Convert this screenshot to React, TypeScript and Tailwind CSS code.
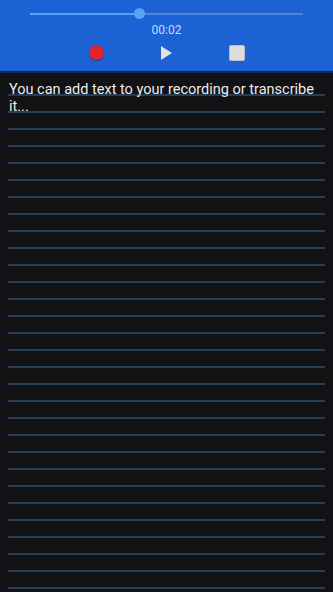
const lines = Array.from({ length: 30 });

export default function App() {
  return (
    <div className="w-[333px] h-[592px] overflow-hidden bg-[#121114] font-['Roboto',sans-serif]">
      {/* player header */}
      <div className="h-[73px] bg-[#1c62d4] border-b-2 border-[#0b2a5c] flex flex-col">
        <div className="pt-[12px] px-[30px]">
          <div className="relative h-[4px] flex items-center">
            <div className="h-[2px] w-[110px] bg-[#5aa2f7]" />
            <div className="h-[2px] flex-1 bg-[#4f86dc]" />
            <div className="absolute left-[104px] top-[-4px] w-[11px] h-[11px] rounded-full bg-[#5aa2f7]" />
          </div>
        </div>
        <div className="mt-[7px] text-center text-[12px] leading-[14px] text-[#c9daf6]">00:02</div>
        <div className="mt-[8px] flex justify-center">
          <div className="w-[70px] flex justify-center">
            <div className="w-[15px] h-[15px] rounded-full bg-[#e0232f] shadow-[0_1px_1px_rgba(0,0,0,0.35)]" />
          </div>
          <div className="w-[70px] flex justify-center">
            <svg width="13" height="16" viewBox="0 0 13 16">
              <path d="M1 1 L12 8 L1 15 Z" fill="#e2e2e2" />
            </svg>
          </div>
          <div className="w-[70px] flex justify-center">
            <div className="w-[16px] h-[16px] rounded-[2px] bg-[#dcdcdc] border border-[#bdbdbd]" />
          </div>
        </div>
      </div>

      {/* lined note area */}
      <div className="relative px-2 pt-[6px]">
        <div className="absolute left-[9px] right-[6px] top-[8px] text-[14.5px] leading-[17px] text-[#ececec]">
          You can add text to your recording or transcribe it...
        </div>
        {lines.map((_, i) => (
          <div key={i} className="h-[17px] border-b-2 border-[#243d5c]" />
        ))}
      </div>
    </div>
  );
}
